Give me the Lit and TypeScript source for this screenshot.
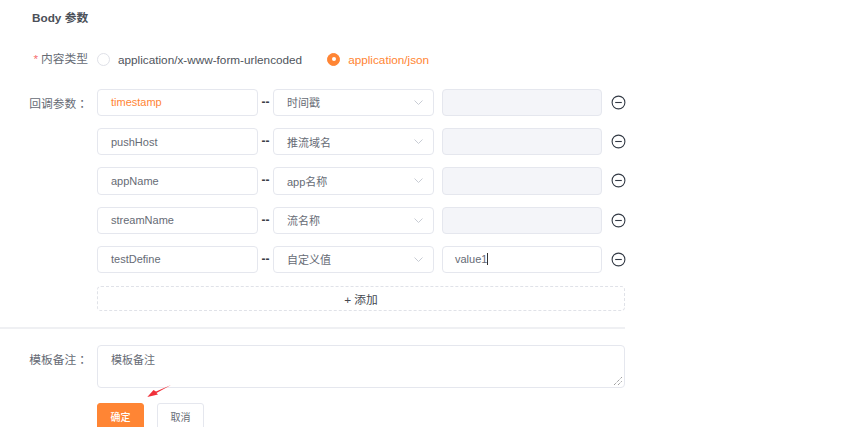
import { LitElement, html, css } from "lit";
import { customElement } from "lit/decorators.js";

const rows = [
  { name: "timestamp", type: "时间戳", value: "", active: true },
  { name: "pushHost", type: "推流域名", value: "" },
  { name: "appName", type: "app名称", value: "" },
  { name: "streamName", type: "流名称", value: "" },
  { name: "testDefine", type: "自定义值", value: "value1", custom: true },
];

@customElement("app-root")
export class AppRoot extends LitElement {
  static styles = css`
    :host { display: block; width: 850px; height: 427px; overflow: hidden; position: relative; background: #fff;
      font-family: "Liberation Sans", "Noto Sans CJK SC", sans-serif; font-size: 11.75px; color: #555b66; }
    * { box-sizing: border-box; }
    .title { padding: 11px 0 0 32px; font-size: 11.75px; line-height: 14px; font-weight: 700; color: #4b5058; height: 25px; }
    .type { display: flex; align-items: center; height: 18px; margin-top: 25px; }
    .label { width: 97px; flex: none; text-align: right; padding-right: 9px; color: #666b75; line-height: 18px; white-space: nowrap; }
    .star { color: #f56c6c; margin-right: 3px; }
    .colon { font-family: "Noto Sans CJK TC", sans-serif; }
    .radio { display: flex; align-items: center; color: #4f545c; white-space: nowrap; }
    .radio i { width: 13px; height: 13px; border-radius: 50%; border: 1px solid #dfe1e8; margin-right: 8px; flex: none; display: flex; align-items: center; justify-content: center; }
    .radio.on { color: #ff8534; margin-left: 25px; }
    .radio.on i { background: #ff8534; border-color: #ff8534; }
    .radio.on i::after { content: ""; width: 4px; height: 4px; background: #fff; border-radius: 50%; }
    .params { display: flex; margin-top: 20.75px; }
    .params .label { padding-top: 5px; }
    .list { display: flex; flex-direction: column; gap: 12px; width: 528px; }
    .row { display: flex; align-items: center; height: 27.25px; }
    .box { flex: none; font-size: 11px; height: 100%; border: 1px solid #e5e7ee; border-radius: 4px; background: #fff; padding: 0 13px; display: flex; align-items: center; justify-content: space-between; color: #666b75; white-space: nowrap; }
    .box.name { width: 161px; }
    .box.active { color: #ff8534; }
    .sep { flex: none; width: 15px; text-align: center; font-weight: 700; color: #3a3f47; line-height: 27px; font-size: 12px; }
    .box.sel { width: 161px; padding-right: 10px; }
    .box.val { width: 160px; margin-left: 8px; padding-left: 12px; }
    .box.val.off { background: #f4f5f9; }
    .caret { display: inline-block; width: 1px; height: 12px; background: #333; vertical-align: -2px; }
    .minus { margin-left: 9px; flex: none; display: block; }
    .add { height: 25px; margin-top: 1px; border: 1px dashed #e0e2e8; border-radius: 4px; display: flex; align-items: center; justify-content: center; color: #444951; }
    .divider { height: 2px; width: 625px; background: #eff0f3; margin-top: 16px; }
    .note { display: flex; margin-top: 16px; }
    .note .label { padding-top: 5px; }
    .area { font-size: 11px; width: 528px; height: 43px; border: 1px solid #e5e7ee; border-radius: 4px; padding: 6px 13px; color: #666b75; line-height: 16px; position: relative; }
    .grip { position: absolute; right: 1px; bottom: 1px; display: block; }
    .btns { display: flex; gap: 13px; margin: 15px 0 0 97px; }
    .btn { width: 47px; height: 27.25px; border-radius: 3px; display: flex; align-items: center; justify-content: center; font-size: 10px; border: 1px solid #e5e7ee; color: #666b75; background: #fff; flex: none; }
    .btn.primary { background: #ff8534; border-color: #ff8534; color: #fff; font-weight: 500; }
    .arrow { position: absolute; left: 145px; top: 383px; }
  `;

  render() {
    return html`
      <div class="title">Body 参数</div>
      <div class="type">
        <div class="label"><span class="star">*</span>内容类型</div>
        <div class="radio"><i></i>application/x-www-form-urlencoded</div>
        <div class="radio on"><i></i>application/json</div>
      </div>
      <div class="params">
        <div class="label">回调参数<span class="colon">：</span></div>
        <div class="list">
          ${rows.map(r => html`
            <div class="row">
              <div class="box name ${r.active ? "active" : ""}">${r.name}</div>
              <div class="sep">--</div>
              <div class="box sel">${r.type}
                <svg width="9" height="5" viewBox="0 0 9 5" fill="none" stroke="#c8ccd4" stroke-width="1"><path d="M.5.5l4 4 4-4"/></svg>
              </div>
              <div class="box val ${r.custom ? "" : "off"}">${r.custom ? html`<span>${r.value}<span class="caret"></span></span>` : ""}</div>
              <svg class="minus" width="15" height="15" viewBox="0 0 15 15" fill="none" stroke="#333a45" stroke-width="1.1"><circle cx="7.5" cy="7.5" r="6.4"/><path d="M4.2 7.5h6.6"/></svg>
            </div>`)}
          <div class="add">+ 添加</div>
        </div>
      </div>
      <div class="divider"></div>
      <div class="note">
        <div class="label">模板备注<span class="colon">：</span></div>
        <div class="area">模板备注
          <svg class="grip" width="10" height="10" viewBox="0 0 10 10" stroke="#777" stroke-width="1" stroke-dasharray="1 1"><path d="M1 9l8-8M5 9l4-4"/></svg>
        </div>
      </div>
      <div class="btns">
        <div class="btn primary">确定</div>
        <div class="btn">取消</div>
      </div>
      <svg class="arrow" width="30" height="16" viewBox="0 0 30 16"><path d="M26 2 L11 8.5 L8.5 7 L2.3 14 L13 11.5 L11.5 10 Z" fill="#f0303a"/></svg>
    `;
  }
}
